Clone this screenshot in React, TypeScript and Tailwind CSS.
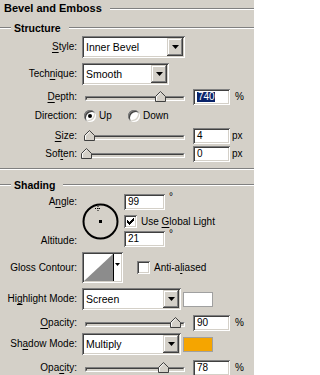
import type { ReactNode } from "react";

const sunken =
  "bg-white shadow-[inset_1px_1px_0_#808080,inset_-1px_-1px_0_#ffffff,inset_2px_2px_0_#404040,inset_-2px_-2px_0_#d4d0c8]";
const raised =
  "bg-[#d4d0c8] shadow-[inset_-1px_-1px_0_#404040,inset_1px_1px_0_#d4d0c8,inset_-2px_-2px_0_#808080,inset_2px_2px_0_#ffffff]";

const Etched = ({ className = "" }: { className?: string }) => (
  <div className={`h-0 border-t border-b border-t-[#808080] border-b-white ${className}`} />
);

const U = ({ children }: { children: ReactNode }) => (
  <span className="underline underline-offset-[2px]">{children}</span>
);

const Label = ({ children }: { children: ReactNode }) => (
  <div className="w-[77px] shrink-0 text-right whitespace-nowrap">{children}</div>
);

const Arrow = () => (
  <svg width="7" height="4" viewBox="0 0 7 4">
    <path d="M0 0h7L3.5 4z" fill="#000" />
  </svg>
);

const Combo = ({ value, w }: { value: string; w: string }) => (
  <div className={`ml-[5px] ${w} h-[22px] flex p-[2px] ${sunken}`}>
    <div className="flex-1 flex items-center pl-[2px] text-[10.5px]">{value}</div>
    <div className={`w-[16px] h-full flex items-center justify-center ${raised}`}>
      <Arrow />
    </div>
  </div>
);

const Field = ({ children, w = "w-[37px]" }: { children: ReactNode; w?: string }) => (
  <div className={`${w} h-[16px] flex items-center pl-[4px] ${sunken}`}>{children}</div>
);

const Slider = ({ pos }: { pos: number }) => (
  <div className="relative ml-[8px] w-[100px] h-[11px] shrink-0">
    <div className="absolute left-0 right-0 top-[4px] h-[5px] border border-t-[#808080] border-l-[#808080] border-r-white border-b-white">
      <div className="h-full border border-t-[#404040] border-l-[#404040] border-r-[#d4d0c8] border-b-[#d4d0c8] bg-[#d4d0c8]" />
    </div>
    <svg
      className="absolute top-[-1px]"
      style={{ left: pos - 5.5 }}
      width="11"
      height="11"
      viewBox="0 0 11 11"
    >
      <path d="M0.5 10.5V5.5L5.5 0.5L10.5 5.5V10.5Z" fill="#d4d0c8" stroke="#404040" />
      <path d="M1.5 9.5V5.8L5.5 1.8" fill="none" stroke="#ffffff" />
    </svg>
  </div>
);

const Radio = ({ on }: { on?: boolean }) => (
  <div
    className={`w-[12px] h-[12px] rounded-full flex items-center justify-center shrink-0 ${sunken}`}
  >
    {on && <div className="w-[4px] h-[4px] rounded-full bg-black" />}
  </div>
);

const Check = ({ on }: { on?: boolean }) => (
  <div className={`w-[13px] h-[13px] flex items-center justify-center shrink-0 ${sunken}`}>
    {on && (
      <svg width="7" height="7" viewBox="0 0 7 7">
        <path d="M0 2h1v1h1v1h1V3h1V2h1V1h1V0h1v3H6v1H5v1H4v1H3v1H2V6H1V5H0z" fill="#000" />
      </svg>
    )}
  </div>
);

const GroupTitle = ({ children }: { children: ReactNode }) => (
  <div className="flex items-center h-[12px]">
    <Etched className="w-[11px]" />
    <div className="ml-[3px] font-bold text-[10.5px]">{children}</div>
    <Etched className="flex-1 ml-[8px]" />
  </div>
);

const SliderRow = ({
  label,
  pos,
  value,
  unit,
  className,
}: {
  label: ReactNode;
  pos: number;
  value: ReactNode;
  unit: string;
  className: string;
}) => (
  <div className={`flex items-center h-[16px] ${className}`}>
    <Label>{label}</Label>
    <Slider pos={pos} />
    <div className="ml-[8px]">
      <Field>{value}</Field>
    </div>
    <div className={unit === "%" ? "ml-[5px]" : "ml-[2px]"}>{unit}</div>
  </div>
);

export default function App() {
  return (
    <div className="w-[254px] h-[375px] overflow-hidden bg-[#d4d0c8] text-black text-[10px] leading-none font-['Liberation_Sans',sans-serif]">
      <div className="flex items-center h-[17px] pl-[4px]">
        <div className="font-bold text-[11px]">Bevel and Emboss</div>
        <Etched className="flex-1 ml-[8px]" />
      </div>
      <div className="mt-[5px]">
        <GroupTitle>Structure</GroupTitle>
      </div>

      <div className="flex items-center mt-[2px] h-[22px]">
        <Label>
          <U>S</U>tyle:
        </Label>
        <Combo value="Inner Bevel" w="w-[103px]" />
      </div>
      <div className="flex items-center mt-[5px] h-[22px]">
        <Label>
          Tech<U>n</U>ique:
        </Label>
        <Combo value="Smooth" w="w-[87px]" />
      </div>

      <SliderRow
        className="mt-[4px]"
        label={
          <>
            <U>D</U>epth:
          </>
        }
        pos={75}
        value={<span className="bg-[#0a246a] text-white pl-[1px]">740</span>}
        unit="%"
      />

      <div className="flex items-center mt-[3px] h-[16px]">
        <Label>Direction:</Label>
        <div className="ml-[7px] w-[44px] flex items-center">
          <Radio on />
          <span className="ml-[3px]">Up</span>
        </div>
        <Radio />
        <span className="ml-[3px]">Down</span>
      </div>

      <SliderRow
        className="mt-[4px]"
        label={
          <>
            <U>S</U>ize:
          </>
        }
        pos={4}
        value="4"
        unit="px"
      />
      <SliderRow
        className="mt-[2px]"
        label={
          <>
            Sof<U>t</U>en:
          </>
        }
        pos={1}
        value="0"
        unit="px"
      />

      <Etched className="mt-[6px]" />

      <div className="mt-[9px]">
        <GroupTitle>Shading</GroupTitle>
      </div>

      <div className="flex mt-[3px] h-[53px]">
        <div className="w-[77px] shrink-0 flex flex-col justify-between text-right pt-[3px] pb-[1px]">
          <div>
            A<U>n</U>gle:
          </div>
          <div>Altitude:</div>
        </div>
        <div className="ml-[5px] mt-[9px] w-[37px] h-[37px] shrink-0">
          <svg width="37" height="37" viewBox="0 0 37 37">
            <circle cx="18.5" cy="18.5" r="17" fill="none" stroke="#000" strokeWidth="2" />
            <rect x="17" y="17" width="3" height="3" fill="#000" />
            <path d="M13 5.5h6M16 3v6" stroke="#000" strokeWidth="1" strokeDasharray="1 1" />
          </svg>
        </div>
        <div className="ml-[5px] flex flex-col">
          <div className="flex items-start">
            <Field w="w-[41px]">99</Field>
            <span className="ml-[4px] mt-[-2px]">°</span>
          </div>
          <div className="flex items-center mt-[5px]">
            <Check on />
            <span className="ml-[4px]">
              Use <U>G</U>lobal Light
            </span>
          </div>
          <div className="flex items-start mt-[3px]">
            <Field w="w-[41px]">21</Field>
            <span className="ml-[4px] mt-[-2px]">°</span>
          </div>
        </div>
      </div>

      <div className="flex items-center mt-[5px] h-[31px]">
        <Label>Gloss Contour:</Label>
        <div className={`ml-[5px] w-[41px] h-[31px] flex p-[2px] ${sunken}`}>
          <svg width="29" height="27" viewBox="0 0 29 27" className="shrink-0">
            <rect width="29" height="27" fill="#fff" />
            <path d="M0 27L29 0V27Z" fill="#8c8c8c" />
          </svg>
          <div className="flex-1 border-l border-l-black bg-white flex justify-center pt-[9px]">
            <svg width="5" height="3" viewBox="0 0 5 3">
              <path d="M0 0h5L2.5 3z" fill="#000" />
            </svg>
          </div>
        </div>
        <div className="ml-[14px]">
          <Check />
        </div>
        <span className="ml-[4px]">
          Anti-a<U>l</U>iased
        </span>
      </div>

      <div className="flex items-center mt-[5px] h-[22px]">
        <Label>
          Hi<U>g</U>hlight Mode:
        </Label>
        <Combo value="Screen" w="w-[99px]" />
        <div className="ml-[2px] w-[30px] h-[15px] bg-white border border-[#a0a0a0]" />
      </div>
      <SliderRow
        className="mt-[5px]"
        label={
          <>
            <U>O</U>pacity:
          </>
        }
        pos={90}
        value="90"
        unit="%"
      />

      <div className="flex items-center mt-[2px] h-[22px]">
        <Label>
          Sh<U>a</U>dow Mode:
        </Label>
        <Combo value="Multiply" w="w-[99px]" />
        <div className="ml-[2px] w-[30px] h-[15px] bg-[#f5a500] border border-[#a0a0a0]" />
      </div>
      <SliderRow
        className="mt-[5px]"
        label={
          <>
            Opa<U>c</U>ity:
          </>
        }
        pos={78}
        value="78"
        unit="%"
      />
    </div>
  );
}
